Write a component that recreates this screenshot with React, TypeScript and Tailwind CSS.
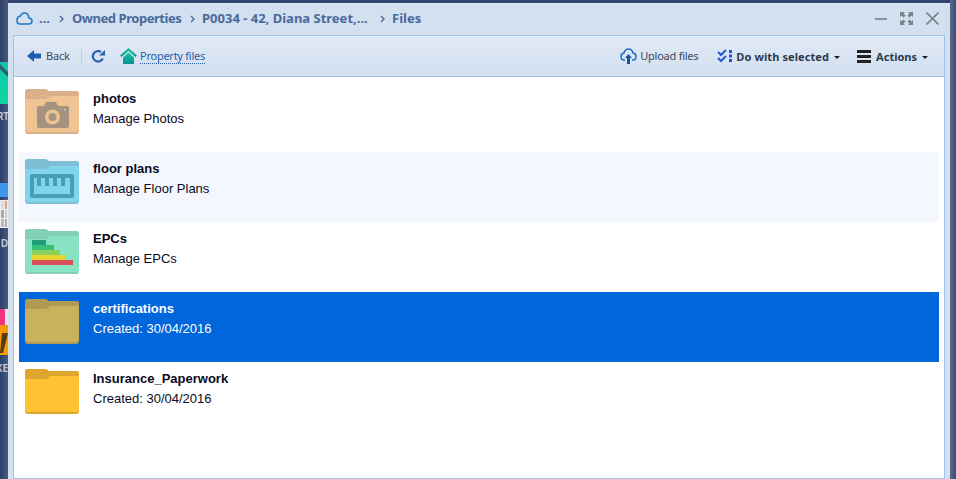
import React from "react";

const uiFont = "font-['Noto_Sans',sans-serif]";

type FolderProps = { body: string; back: string; children?: React.ReactNode };

// flat folder, 54x45, art is passed in as svg children
function Folder({ body, back, children }: FolderProps) {
  return (
    <svg width="54" height="45" viewBox="0 0 54 45" className="shrink-0">
      <path d="M2 0H20Q22 0 24 2H52Q54 2 54 4V42Q54 45 51 45H3Q0 45 0 42V2Q0 0 2 0Z" fill={back} />
      <path d="M0 10H21Q23 10 25 7H52Q54 7 54 9V40Q54 43 51 43H3Q0 43 0 40Z" fill={body} />
      {children}
    </svg>
  );
}

const rows = [
  {
    name: "photos",
    sub: "Manage Photos",
    body: "#efc492",
    back: "#d9b08a",
    art: (
      <g>
        <path d="M12 19Q12 17 14 17H19L21 13H31L33 17H42Q44 17 44 19V37Q44 39 42 39H14Q12 39 12 37Z" fill="#a4947f" />
        <circle cx="27.5" cy="28" r="7.5" fill="#efc492" />
        <circle cx="27.5" cy="28" r="4" fill="#a4947f" />
        <circle cx="40" cy="20.5" r="1" fill="#efc492" />
      </g>
    ),
  },
  {
    name: "floor plans",
    sub: "Manage Floor Plans",
    body: "#80d4ec",
    back: "#7fbfd5",
    art: (
      <g>
        <path d="M7 15Q5 15 5 17V37Q5 39 7 39H47Q49 39 49 37V17Q49 15 47 15ZM9 19H12V27H16V19H20V27H24V19H28V27H32V19H36V27H40V19H45V35H9Z" fill="#4a9fb8" fillRule="evenodd" />
      </g>
    ),
  },
  {
    name: "EPCs",
    sub: "Manage EPCs",
    body: "#88e3c3",
    back: "#85cfb6",
    art: (
      <g>
        <rect x="7" y="11" width="14" height="5" fill="#1f9c78" />
        <rect x="7" y="16" width="22" height="5" fill="#38bf78" />
        <rect x="7" y="21" width="28" height="5" fill="#8dcf5c" />
        <rect x="7" y="26" width="33" height="5" fill="#e4d530" />
        <rect x="7" y="31" width="41" height="5" fill="#d9505a" />
      </g>
    ),
  },
  { name: "certifications", sub: "Created: 30/04/2016", body: "#c9b25d", back: "#b09a55", selected: true },
  { name: "Insurance_Paperwork", sub: "Created: 30/04/2016", body: "#ffc233", back: "#dea52f" },
];

function Chevron() {
  return (
    <svg width="5" height="8" viewBox="0 0 5 8" className="shrink-0">
      <path d="M1 1L4 4L1 7" fill="none" stroke="#4a6a9c" strokeWidth="1.4" />
    </svg>
  );
}

function Caret() {
  return <span className="ml-[5px] mt-[2px] h-0 w-0 border-x-[3px] border-t-[3px] border-x-transparent border-t-[#222]" />;
}

function DesktopStrip() {
  return (
    <div className={`relative w-2 shrink-0 overflow-hidden bg-gradient-to-r from-[#2b3f68] to-[#4a5a7e] ${uiFont}`}>
      <div className="absolute left-0 top-[62px] h-[42px] w-2 bg-gradient-to-b from-[#10c4a8] to-[#0fd8a0]" />
      <svg className="absolute left-0 top-[64px]" width="8" height="20" viewBox="0 0 8 20">
        <path d="M0 0L8 8V13L0 5Z" fill="#2d5f70" />
      </svg>
      <span className="absolute right-[-1px] top-[109px] text-[10px] font-semibold leading-[14px] text-[#c6cfdf]">RT</span>
      <div className="absolute left-0 top-[183px] h-[14px] w-2 bg-[#3f97ea]" />
      <div className="absolute left-0 top-[200px] grid h-[28px] w-2 grid-cols-2 gap-px bg-[#eee] p-px">
        <div className="bg-[#ddd]" />
        <div className="bg-[#e8a070]" />
        <div className="bg-[#aaa]" />
        <div className="bg-[#ccc]" />
        <div className="bg-[#bbb]" />
        <div className="bg-[#aaa]" />
      </div>
      <span className="absolute right-0 top-[236px] text-[10px] font-semibold leading-[14px] text-[#c6cfdf]">D</span>
      <div className="absolute left-0 top-[309px] h-4 w-[5px] bg-[#f0357e]" />
      <div className="absolute left-[5px] top-[309px] h-4 w-[3px] bg-[#e6e6ea]" />
      <div className="absolute left-0 top-[325px] h-[30px] w-2 bg-[#f79a08]" />
      <svg className="absolute left-0 top-[333px]" width="8" height="20" viewBox="0 0 8 20">
        <path d="M2 0H8L3 20H0Z" fill="#5a3a10" />
      </svg>
      <span className="absolute right-0 top-[361px] text-[10px] font-semibold leading-[14px] text-[#c6cfdf]">KE</span>
    </div>
  );
}

export default function App() {
  return (
    <div className="flex h-[479px] w-[956px] overflow-hidden bg-[#2f4570]">
      <DesktopStrip />
      <div className="mt-[3px] flex h-[476px] w-[942px] flex-col border-t border-[#e4ecf6] bg-[#d3e0f0] pl-[5px] pr-[5px]">
        {/* title bar */}
        <div className={`flex h-[31px] shrink-0 items-center pb-[2px] text-[13px] font-bold text-[#4a6a9c] ${uiFont}`}>
          <svg width="17" height="13" viewBox="0 0 17 13" className="ml-[3px] shrink-0">
            <path d="M4 12H13Q16 12 16 9Q16 6.5 13 6Q12.5 1 8.5 1Q5.5 1 4.5 4Q1 4.5 1 8.5Q1 12 4 12Z" fill="none" stroke="#1f78c8" strokeWidth="1.6" />
          </svg>
          <span className="ml-[6px] w-[20px]">...</span>
          <Chevron />
          <span className="ml-2 w-[118px] whitespace-nowrap tracking-[-0.45px]">Owned Properties</span>
          <Chevron />
          <span className="ml-[7px] w-[178px] whitespace-nowrap">P0034 - 42, Diana Street,...</span>
          <Chevron />
          <span className="ml-[7px]">Files</span>
          <div className="ml-auto mr-[6px] flex items-center gap-[13px]">
            <div className="h-[2px] w-[12px] bg-[#8a8f96]" />
            <svg width="13" height="13" viewBox="0 0 13 13">
              <path d="M0 0H5L3.5 1.5L5.5 3.5L3.5 5.5L1.5 3.5L0 5ZM13 0V5L11.5 3.5L9.5 5.5L7.5 3.5L9.5 1.5L8 0ZM0 13V8L1.5 9.5L3.5 7.5L5.5 9.5L3.5 11.5L5 13ZM13 13H8L9.5 11.5L7.5 9.5L9.5 7.5L11.5 9.5L13 8Z" fill="#7c8187" />
            </svg>
            <svg width="13" height="13" viewBox="0 0 13 13">
              <path d="M0.5 0.5L12.5 12.5M12.5 0.5L0.5 12.5" stroke="#7c8187" strokeWidth="1.6" />
            </svg>
          </div>
        </div>

        {/* panel */}
        <div className="flex min-h-0 flex-1 flex-col border border-[#9fc2ea]">
          <div className={`flex h-[40px] shrink-0 items-center bg-gradient-to-b from-[#e0e9f6] to-[#d3e0f0] pl-[13px] pr-[16px] text-[11px] text-[#3c4858] ${uiFont}`}>
            <svg width="14" height="12" viewBox="0 0 14 12" className="shrink-0">
              <path d="M0 6L7 0V3.5H14V8.5H7V12Z" fill="#1f5fb0" />
            </svg>
            <span className="ml-[5px] w-[23px] tracking-[-0.2px]">Back</span>
            <div className="ml-[12px] h-[14px] w-px bg-[#b4cdec]" />
            <svg width="14" height="14" viewBox="0 0 14 14" className="ml-[9px] shrink-0">
              <path d="M11.8 9.5A5.2 5.2 0 1 1 10 3" fill="none" stroke="#2a5ea8" strokeWidth="2.2" />
              <path d="M8 6.5H14V1Z" fill="#2a5ea8" />
            </svg>
            <svg width="17" height="16" viewBox="0 0 17 16" className="ml-[15px] shrink-0">
              <defs>
                <linearGradient id="home" x1="0" y1="0" x2="0" y2="1">
                  <stop offset="0" stopColor="#12c99a" />
                  <stop offset="1" stopColor="#0a8f96" />
                </linearGradient>
              </defs>
              <path d="M8.5 0L17 7.5L15.5 9L8.5 3L1.5 9L0 7.5Z" fill="url(#home)" />
              <path d="M8.5 4.5L14 9.5V16H3V9.5Z" fill="url(#home)" />
            </svg>
            <span className="ml-[3px] border-b border-dotted border-[#2a5ea8] leading-[14px] tracking-[-0.25px] text-[#2a5ea8]">Property files</span>

            <svg width="17" height="16" viewBox="0 0 17 16" className="ml-auto shrink-0">
              <path d="M5 12H4Q1 12 1 8.5Q1 5.5 4 5Q5 1 8.5 1Q12 1 13 5Q16 5.5 16 8.5Q16 12 13 12H12" fill="none" stroke="#1f6fc0" strokeWidth="1.5" />
              <path d="M8.5 6L12 10H10V16H7V10H5Z" fill="#1c4f9c" />
            </svg>
            <span className="ml-[3px] mr-[19px] w-[58px] whitespace-nowrap tracking-[-0.25px]">Upload files</span>
            <svg width="15" height="14" viewBox="0 0 15 14" className="shrink-0">
              <path d="M1 3L4 6L9 1M1 9L4 12L9 7" fill="none" stroke="#1c5ad8" strokeWidth="2" />
              <rect x="12" y="1" width="3" height="3" fill="#1c5ad8" />
              <rect x="12" y="5.5" width="3" height="3" fill="#1c5ad8" />
              <rect x="12" y="10" width="3" height="3" fill="#1c5ad8" />
            </svg>
            <span className="ml-1 mt-[2px] whitespace-nowrap font-bold tracking-[0.1px] text-[#2b3a4e]">Do with selected</span>
            <Caret />
            <div className="ml-[17px] flex h-[13px] w-[14px] flex-col justify-between">
              <div className="h-[3px] bg-[#222]" />
              <div className="h-[3px] bg-[#222]" />
              <div className="h-[3px] bg-[#222]" />
            </div>
            <span className="ml-[5px] mt-[2px] font-bold text-[#2b3a4e]">Actions</span>
            <Caret />
          </div>

          <div className="min-h-0 flex-1 border-t border-[#9fc2ea] bg-white px-[5px] pt-[5px] font-['Liberation_Sans',sans-serif]">
            {rows.map((r, i) => (
              <div
                key={r.name}
                className={`flex h-[70px] gap-[14px] pl-[6px] pr-2 pt-[7px] ${
                  r.selected ? "bg-[#0066dc] text-white" : i === 1 ? "bg-[#f4f8fe] text-[#0a0a1e]" : "text-[#0a0a1e]"
                }`}
              >
                <Folder body={r.body} back={r.back}>
                  {r.art}
                </Folder>
                <div className="text-[13px] leading-5">
                  <div className="font-bold">{r.name}</div>
                  <div>{r.sub}</div>
                </div>
              </div>
            ))}
          </div>
        </div>
      </div>
      <div className="w-[6px] shrink-0 bg-gradient-to-r from-[#5a6a8a] to-[#3a4d73]" />
    </div>
  );
}
